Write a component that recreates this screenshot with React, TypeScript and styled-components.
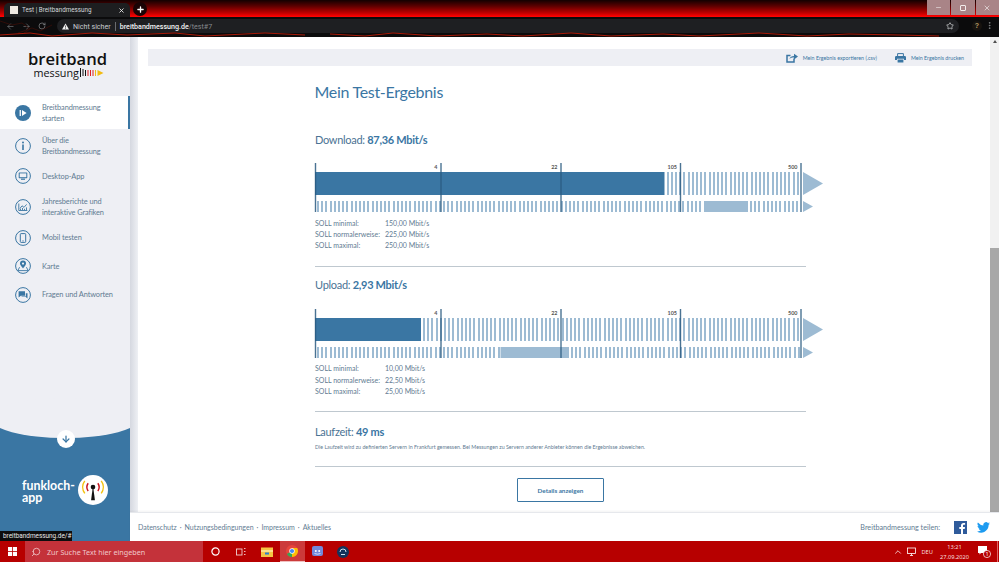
import styled, { createGlobalStyle } from "styled-components";
import { ArrowLeft, ArrowRight, RotateCw, Star, Plus, X, Minus, MoreVertical, ChevronUp, Search, ArrowDown } from "lucide-react";

const GlobalStyle = createGlobalStyle`
  html, body { margin: 0; padding: 0; background: #fff; }
  body { font-family: "Lato", "Noto Sans", sans-serif; overflow: hidden; }
  * { box-sizing: border-box; }
`;

const BLUE = "#3a76a3";
const LIGHT = "#9dbbd3";
const TEXT = "#5f7b92";

const Page = styled.div`
  width: 999px;
  height: 562px;
  display: flex;
  flex-direction: column;
  overflow: hidden;
  position: relative;
`;

/* browser chrome */
const Chrome = styled.header`
  height: 37px;
  flex: none;
  display: flex;
  flex-direction: column;
  position: relative;
  background: #0b0b0c;
`;
const TabStrip = styled.div`
  height: 17px;
  display: flex;
  align-items: flex-end;
  padding-left: 4px;
  gap: 3px;
  background: linear-gradient(180deg, #120000 0%, #5a0000 35%, #c40000 78%, #f00000 92%, #ff0505 100%);
`;
const Tab = styled.div`
  width: 126px;
  height: 14px;
  background: #1d1e20;
  border-radius: 5px 5px 0 0;
  display: flex;
  align-items: center;
  padding: 0 5px 0 6px;
  gap: 4px;
  color: #d6d8da;
  font: 6.3px "Roboto", sans-serif;
`;
const Favicon = styled.span`
  width: 8px;
  height: 8px;
  background: #efe9e2;
  flex: none;
`;
const TabTitle = styled.span`
  flex: 1;
  white-space: nowrap;
`;
const NewTab = styled.span`
  width: 14px;
  height: 14px;
  border-radius: 50%;
  background: #1a0305;
  color: #fff;
  display: flex;
  align-items: center;
  justify-content: center;
  margin-bottom: 1px;
`;
const WindowControls = styled.div`
  margin-left: auto;
  align-self: flex-start;
  display: flex;
  gap: 1px;
  height: 15px;
`;
const WindowButton = styled.span`
  width: 23.5px;
  height: 15px;
  background: #a98487;
  color: #f2ecec;
  display: flex;
  align-items: center;
  justify-content: center;
`;
const RestoreGlyph = styled.span`
  width: 6px;
  height: 6px;
  border: 1px solid #f2ecec;
  border-radius: 1px;
`;
const ToolRow = styled.div`
  height: 20px;
  display: flex;
  align-items: flex-start;
  padding: 2px 4px 0 6px;
  position: relative;
`;
const NavButtons = styled.div`
  width: 51px;
  height: 14px;
  display: flex;
  align-items: center;
  gap: 7px;
  color: #6a6c6f;
`;
const Omnibox = styled.div`
  width: 902px;
  height: 14px;
  background: #1e1f22;
  border-radius: 7px;
  display: flex;
  align-items: center;
  padding: 0 5px;
  font: 7.1px "Roboto", sans-serif;
  color: #c9cccf;
`;
const WarnIcon = styled.svg`
  width: 7px;
  height: 7px;
  margin: 0 4px 0 0;
`;
const UrlDivider = styled.span`
  width: 1px;
  height: 9px;
  background: #6a6c70;
  margin: 0 4px;
`;
const UrlHost = styled.span`
  color: #f2f3f4;
  font-weight: 500;
`;
const UrlPath = styled.span`
  color: #85888c;
`;
const OmniStar = styled.span`
  margin-left: auto;
  display: flex;
  color: #e4e5e7;
`;
const Avatar = styled.span`
  width: 10px;
  height: 10px;
  border-radius: 50%;
  background: #17130f;
  color: #b59a62;
  font: 700 7px "Liberation Sans", sans-serif;
  text-align: center;
  line-height: 10px;
  margin: 2px 0 0 13px;
`;
const MenuDots = styled.span`
  display: flex;
  color: #8f9194;
  margin: 2px 0 0 3px;
`;
const Lava = styled.svg`
  position: absolute;
  left: 0;
  top: 17px;
  width: 999px;
  height: 20px;
  pointer-events: none;
`;

/* body */
const Body = styled.div`
  flex: 1;
  min-height: 0;
  display: flex;
`;
const Sidebar = styled.aside`
  width: 130px;
  flex: none;
  display: flex;
  flex-direction: column;
  background: #eeeff4;
  overflow: hidden;
`;
const LogoBlock = styled.div`
  height: 59px;
  flex: none;
  padding: 13px 0 0 28px;
  color: #111;
  font-family: "Open Sans", sans-serif;
`;
const LogoTop = styled.div`
  font-size: 16.6px;
  font-weight: 600;
  line-height: 17px;
`;
const LogoBottom = styled.div`
  font-size: 10.8px;
  line-height: 11px;
  margin-left: 5.5px;
  display: flex;
  align-items: center;
  gap: 1px;
  white-space: nowrap;
`;
const NavList = styled.nav`
  display: flex;
  flex-direction: column;
`;
const NavItem = styled.a<{ $active?: boolean }>`
  min-height: 28.5px;
  padding: 5.5px 0 5.5px 15px;
  display: flex;
  align-items: center;
  gap: 11px;
  color: ${TEXT};
  font-size: 7.4px;
  letter-spacing: -0.1px;
  line-height: 11px;
  background: ${(p) => (p.$active ? "#fff" : "transparent")};
  border-right: 2px solid ${(p) => (p.$active ? BLUE : "transparent")};
`;
const NavGlyph = styled.svg`
  width: 16px;
  height: 16px;
  flex: none;
`;
const AppPanel = styled.div`
  margin-top: auto;
  height: 113px;
  background: ${BLUE};
  position: relative;
  display: flex;
  align-items: flex-start;
  padding: 52px 0 0 22px;
  &::before {
    content: "";
    position: absolute;
    left: -10px;
    right: -10px;
    top: -30px;
    height: 40px;
    background: #eeeff4;
    border-radius: 50%;
  }
`;
const DownBadge = styled.span`
  position: absolute;
  left: 57px;
  top: 2px;
  width: 18px;
  height: 18px;
  border-radius: 50%;
  background: #fff;
  color: ${BLUE};
  display: flex;
  align-items: center;
  justify-content: center;
`;
const AppName = styled.div`
  color: #fff;
  font-weight: 700;
  font-size: 12.4px;
  line-height: 12px;
  width: 56px;
`;
const AppLogo = styled.svg`
  width: 30px;
  height: 30px;
  flex: none;
  margin-top: -5px;
`;
const Right = styled.div`
  flex: 1;
  min-width: 0;
  display: flex;
  flex-direction: column;
`;
const Upper = styled.div`
  flex: 1;
  min-height: 0;
  display: flex;
`;
const Gutter = styled.div`
  width: 8px;
  flex: none;
  background: linear-gradient(90deg, #d5d8e0, #eef0f4);
`;
const Content = styled.main`
  flex: 1;
  min-width: 0;
  padding: 12px 18px 0 10px;
  background: #fff;
`;
const ScrollBar = styled.div`
  width: 9px;
  flex: none;
  background: #f1f1f1;
  display: flex;
  flex-direction: column;
  align-items: center;
  padding-top: 3px;
`;
const ScrollArrow = styled.span`
  width: 0;
  height: 0;
  border-left: 2.5px solid transparent;
  border-right: 2.5px solid transparent;
  border-bottom: 3px solid #505050;
`;
const ScrollThumb = styled.span`
  width: 100%;
  height: 264px;
  margin-top: auto;
  background: #a8a8a8;
`;
const ActionBar = styled.div`
  height: 17px;
  background: #eeeff4;
  display: flex;
  justify-content: flex-end;
  align-items: center;
  padding-right: 8px;
  gap: 18px;
`;
const Action = styled.a`
  display: flex;
  align-items: center;
  gap: 5px;
  color: ${BLUE};
  font-size: 5.3px;
  white-space: nowrap;
`;
const Report = styled.section`
  margin-left: 167px;
  width: 491px;
`;
const Title = styled.h1`
  margin: 15px 0 0 -0.5px;
  font-size: 16px;
  letter-spacing: -0.3px;
  line-height: 22px;
  font-weight: 400;
  color: ${BLUE};
`;
const Heading = styled.h2<{ $top: number }>`
  margin: ${(p) => p.$top}px 0 0;
  font-size: 11px;
  letter-spacing: -0.3px;
  line-height: 14px;
  font-weight: 400;
  color: #4b7394;
  strong {
    color: ${BLUE};
    font-weight: 700;
  }
`;
const ChartSvg = styled.svg<{ $top: number }>`
  display: block;
  width: 510px;
  height: 50px;
  margin-top: ${(p) => p.$top}px;
  overflow: visible;
`;
const SollTable = styled.dl`
  margin: 4.5px 0 0;
  display: grid;
  grid-template-columns: 70px auto;
  justify-content: start;
  font-size: 7px;
  line-height: 11.3px;
  color: ${TEXT};
  dt, dd { margin: 0; }
`;
const SollRow = styled.div`
  display: contents;
`;
const Rule = styled.hr<{ $top: number }>`
  margin: ${(p) => p.$top}px 0 0;
  border: 0;
  height: 1px;
  background: #bfc8cf;
`;
const Note = styled.p`
  margin: 4px 0 0;
  font-size: 5.3px;
  line-height: 8px;
  color: ${TEXT};
  white-space: nowrap;
`;
const DetailsButton = styled.button`
  display: block;
  width: 87px;
  height: 24px;
  margin: 11px 0 0 202px;
  background: #fff;
  border: 1.5px solid ${BLUE};
  border-radius: 1px;
  color: ${BLUE};
  font: 700 6.3px "Lato", sans-serif;
`;
const Footer = styled.footer`
  height: 29px;
  flex: none;
  background: #fff;
  border-top: 1px solid #e6e8ec;
  box-shadow: 0 -1px 2px rgba(0, 0, 0, 0.05);
  display: flex;
  align-items: center;
  padding: 0 9px 0 8px;
  color: ${TEXT};
  font-size: 7px;
  position: relative;
`;
const FooterLinks = styled.div`
  display: flex;
  gap: 3px;
`;
const Share = styled.div`
  margin-left: auto;
  display: flex;
  align-items: center;
  font-size: 7.2px;
  gap: 14px;
`;
const ShareIcons = styled.div`
  display: flex;
  align-items: center;
  gap: 10px;
`;
const StatusTip = styled.div`
  position: absolute;
  left: 0;
  bottom: 21px;
  height: 10px;
  width: 72px;
  background: #0d0d0e;
  color: #e8e8e8;
  font: 6.4px/10px "Roboto", sans-serif;
  padding-left: 3px;
`;

/* taskbar */
const Taskbar = styled.div`
  height: 21px;
  flex: none;
  background: #b70000;
  display: flex;
  align-items: stretch;
  color: #fff;
`;
const StartButton = styled.span`
  width: 25px;
  display: flex;
  align-items: center;
  justify-content: center;
`;
const SearchBox = styled.div`
  width: 178px;
  background: #c4323a;
  display: flex;
  align-items: center;
  padding-left: 6px;
  gap: 6px;
  color: #f0c8ca;
  font: 7.2px "Noto Sans", sans-serif;
`;
const SearchGlyph = styled(Search)`
  transform: scaleX(-1);
`;
const TaskIcon = styled.span<{ $active?: boolean }>`
  width: 25.5px;
  display: flex;
  align-items: center;
  justify-content: center;
  background: ${(p) => (p.$active ? "#cc3a3a" : "transparent")};
  border-bottom: ${(p) => (p.$active ? "1px solid #f0c0c0" : "0")};
`;
const TaskIcons = styled.div`
  display: flex;
`;
const Tray = styled.div`
  margin-left: auto;
  display: flex;
  align-items: center;
  font: 5.7px "Noto Sans", sans-serif;
  color: #f6dede;
`;
const TrayMonitor = styled.svg`
  width: 10px;
  height: 9px;
  margin-left: 3px;
`;
const TrayLang = styled.span`
  margin: 0 7px 0 5px;
`;
const Clock = styled.div`
  text-align: center;
  line-height: 10px;
  margin-right: 9px;
`;
const Notify = styled.svg`
  width: 13px;
  height: 13px;
  margin-right: 6px;
`;
const ShowDesktop = styled.span`
  width: 1px;
  align-self: stretch;
  margin-right: 1px;
  background: #d66;
`;

const navItems: { label: string[]; icon: React.ReactNode }[] = [
  {
    label: ["Breitbandmessung", "starten"],
    icon: (
      <>
        <circle cx="8" cy="8" r="8" fill={BLUE} />
        <rect x="4.6" y="5" width="1.3" height="6" fill="#fff" />
        <path d="M7 5l4.6 3L7 11z" fill="#fff" />
      </>
    ),
  },
  {
    label: ["Über die", "Breitbandmessung"],
    icon: (
      <>
        <circle cx="8" cy="8" r="7.4" fill="none" stroke={BLUE} />
        <circle cx="8" cy="4.6" r="1" fill={BLUE} />
        <rect x="7.2" y="6.5" width="1.6" height="5.5" fill={BLUE} />
      </>
    ),
  },
  {
    label: ["Desktop-App"],
    icon: (
      <>
        <circle cx="8" cy="8" r="7.4" fill="none" stroke={BLUE} />
        <rect x="3.7" y="4.4" width="8.6" height="5.8" rx="0.6" fill={BLUE} />
        <rect x="4.7" y="5.4" width="6.6" height="3.8" fill="#eeeff4" />
        <rect x="6" y="10.6" width="4" height="1.2" fill={BLUE} />
      </>
    ),
  },
  {
    label: ["Jahresberichte und", "interaktive Grafiken"],
    icon: (
      <>
        <circle cx="8" cy="8" r="7.4" fill="none" stroke={BLUE} />
        <path d="M3.8 4.5v7h8.6M5 9.4l2-2.6 2 1.6 2.6-3" fill="none" stroke={BLUE} strokeWidth="0.9" />
        <path d="M5.5 11v-1.4M7.5 11V9M9.5 11V9.8M11.5 11V8.4" stroke={BLUE} strokeWidth="0.9" />
      </>
    ),
  },
  {
    label: ["Mobil testen"],
    icon: (
      <>
        <circle cx="8" cy="8" r="7.4" fill="none" stroke={BLUE} />
        <rect x="5.3" y="3.6" width="5.4" height="8.8" rx="0.8" fill="none" stroke={BLUE} />
        <rect x="7.4" y="10.4" width="1.2" height="1" fill={BLUE} />
      </>
    ),
  },
  {
    label: ["Karte"],
    icon: (
      <>
        <circle cx="8" cy="8" r="7.4" fill="none" stroke={BLUE} />
        <path d="M8 2.6a3 3 0 0 1 3 3c0 1.8-3 4.8-3 4.8S5 7.4 5 5.6a3 3 0 0 1 3-3z" fill={BLUE} />
        <circle cx="8" cy="5.6" r="1.1" fill="#eeeff4" />
        <path d="M4.6 9.2L2.8 12.6h10.4l-1.8-3.4" fill="none" stroke={BLUE} strokeWidth="0.9" />
      </>
    ),
  },
  {
    label: ["Fragen und Antworten"],
    icon: (
      <>
        <circle cx="8" cy="8" r="7.4" fill="none" stroke={BLUE} />
        <path d="M3.6 4.2h6.4v4.6H5.800L3.6 10.600z" fill={BLUE} />
        <path d="M10.800 6.200h1.700v5.400l-1.700-1.500H6.600V9.500h4.200z" fill={BLUE} />
      </>
    ),
  },
];

type ChartProps = {
  top: number;
  solidEnd: number;
  blockStart: number;
  blockEnd: number;
};

// x values in the chart are offsets from the left edge of the report column
const TICKS = [
  { x: 0.5, label: "" },
  { x: 126, label: "4" },
  { x: 246, label: "22" },
  { x: 365.5, label: "105" },
  { x: 486, label: "500" },
];

function stripes(from: number, to: number, y: number, h: number) {
  const out: React.ReactNode[] = [];
  for (let x = from; x < to; x += 4.2) {
    out.push(<rect key={x} x={x} y={y} width={2} height={h} fill={LIGHT} shapeRendering="crispEdges" />);
  }
  return out;
}

function SpeedChart({ top, solidEnd, blockStart, blockEnd }: ChartProps) {
  return (
    <ChartSvg $top={top} viewBox="0 0 510 50">
      <rect x="0" y="9" width={solidEnd} height="23" fill={BLUE} />
      {stripes(solidEnd + 2, 485, 9, 23)}
      <path d="M488 9l20 11.5L488 32z" fill={LIGHT} />
      {stripes(2, blockStart - 2, 38, 11)}
      <rect x={blockStart} y="38" width={blockEnd - blockStart} height="11" fill={LIGHT} />
      {stripes(blockEnd + 2, 485, 38, 11)}
      <path d="M488 38l10 5.5L488 49z" fill={LIGHT} />
      {TICKS.map((t) => (
        <g key={t.x}>
          <rect x={t.x - 0.7} y="0" width="1.4" height="49" fill="#2a5a80" opacity={0.85} />
          <text x={t.x - 3.5} y="5.5" textAnchor="end" fontSize="5.4" fontWeight="700" fill="#555">
            {t.label}
          </text>
        </g>
      ))}
    </ChartSvg>
  );
}

function Soll({ rows }: { rows: string[] }) {
  const names = ["SOLL minimal:", "SOLL normalerweise:", "SOLL maximal:"];
  return (
    <SollTable>
      {names.map((name, i) => (
        <SollRow key={name}>
          <dt>{name}</dt>
          <dd>{rows[i]} Mbit/s</dd>
        </SollRow>
      ))}
    </SollTable>
  );
}

function WindowsLogo() {
  return (
    <svg width="9" height="9" viewBox="0 0 9 9" fill="#fff">
      <rect width="4.1" height="4.1" />
      <rect x="4.9" width="4.1" height="4.1" />
      <rect y="4.9" width="4.1" height="4.1" />
      <rect x="4.9" y="4.9" width="4.1" height="4.1" />
    </svg>
  );
}

const cracks = [
  "M0 18l30-2 22 3 40-3 35 2 48-2 30 3 60-3 40 2",
  "M330 17l35 2 28-3 44 3 50-2 36 2 48-3 40 3 52-2 36 2 60-3 48 3 42-2 50 1 40 1",
];
const faintCracks = ["M0 4l12 4 10-2 8 6-6 4", "M18 16l14-5 8 3 12-6"];

export default function App() {
  return (
    <Page>
      <GlobalStyle />
      <Chrome>
        <TabStrip>
          <Tab>
            <Favicon />
            <TabTitle>Test | Breitbandmessung</TabTitle>
            <X size={7} color="#e8e8e8" strokeWidth={3} />
          </Tab>
          <NewTab>
            <Plus size={9} strokeWidth={3.5} />
          </NewTab>
          <WindowControls>
            <WindowButton>
              <Minus size={7} />
            </WindowButton>
            <WindowButton>
              <RestoreGlyph />
            </WindowButton>
            <WindowButton>
              <X size={8} />
            </WindowButton>
          </WindowControls>
        </TabStrip>
        <ToolRow>
          <NavButtons>
            <ArrowLeft size={9} />
            <ArrowRight size={9} />
            <RotateCw size={8} color="#8d8f92" />
          </NavButtons>
          <Omnibox>
            <WarnIcon viewBox="0 0 10 10">
              <path d="M5 .6l5 8.8H0z" fill="#f0f0f0" />
              <rect x="4.5" y="3.6" width="1" height="3" fill="#1e1f22" />
              <rect x="4.5" y="7.2" width="1" height="1" fill="#1e1f22" />
            </WarnIcon>
            Nicht sicher
            <UrlDivider />
            <UrlHost>breitbandmessung.de</UrlHost>
            <UrlPath>/test#7</UrlPath>
            <OmniStar>
              <Star size={8} />
            </OmniStar>
          </Omnibox>
          <Avatar>?</Avatar>
          <MenuDots>
            <MoreVertical size={9} />
          </MenuDots>
        </ToolRow>
        <Lava viewBox="0 0 999 20" fill="none">
          {faintCracks.map((d) => (
            <path key={d} d={d} stroke="#3a0e08" strokeWidth="0.8" />
          ))}
          {cracks.map((d) => (
            <path key={d} d={d} stroke="#a81a08" strokeWidth="1" />
          ))}
        </Lava>
      </Chrome>

      <Body>
        <Sidebar>
          <LogoBlock>
            <LogoTop>breitband</LogoTop>
            <LogoBottom>
              messung
              <svg width="26" height="9" viewBox="0 0 26 9">
                <rect x="0" y="0" width="1" height="9" fill="#111" />
                <rect x="2.5" y="1" width="1" height="7" fill="#111" />
                <rect x="5" y="2" width="1" height="6" fill="#111" />
                <rect x="7.5" y="2" width="1" height="6" fill="#d22" />
                <rect x="10" y="2" width="1" height="6" fill="#d22" />
                <rect x="12.5" y="2" width="1" height="6" fill="#d22" />
                <rect x="15" y="2" width="1" height="6" fill="#f2bb10" />
                <path d="M17.5 2l6 3-6 3z" fill="#f2bb10" />
              </svg>
            </LogoBottom>
          </LogoBlock>
          <NavList>
            {navItems.map((item, i) => (
              <NavItem key={item.label[0]} $active={i === 0}>
                <NavGlyph viewBox="0 0 16 16">{item.icon}</NavGlyph>
                <span>
                  {item.label.map((line) => (
                    <div key={line}>{line}</div>
                  ))}
                </span>
              </NavItem>
            ))}
          </NavList>
          <AppPanel>
            <DownBadge>
              <ArrowDown size={10} strokeWidth={3} />
            </DownBadge>
            <AppName>
              funkloch-
              <br />
              app
            </AppName>
            <AppLogo viewBox="0 0 31 31">
              <circle cx="15.5" cy="15.5" r="15.5" fill="#fff" />
              <path d="M15.5 11l2 15h-4z" fill="#111" />
              <circle cx="15.5" cy="12.5" r="2.4" fill="#111" />
              <path d="M10.5 8.5a7 7 0 0 0 0 8M20.5 8.5a7 7 0 0 1 0 8" fill="none" stroke="#c8141e" strokeWidth="1.5" />
              <path d="M7 6a11 11 0 0 0 0 13M24 6a11 11 0 0 1 0 13" fill="none" stroke="#f4c20d" strokeWidth="1.5" />
            </AppLogo>
          </AppPanel>
        </Sidebar>

        <Right>
          <Upper>
            <Gutter />
            <Content>
              <ActionBar>
                <Action>
                  <svg width="12" height="10" viewBox="0 0 12 10">
                    <path d="M8 5.5V9H1V2.5h3.5" fill="none" stroke={BLUE} strokeWidth="1.5" />
                    <path d="M3.4 6.2C4 3.8 5.8 2.9 8 2.9V.8L12 3.6 8 6.4V4.6C6 4.6 4.6 5 3.4 6.2z" fill={BLUE} />
                  </svg>
                  Mein Ergebnis exportieren (.csv)
                </Action>
                <Action>
                  <svg width="11" height="10" viewBox="0 0 11 10">
                    <path d="M2.6 3V.6h5.8V3" fill="none" stroke={BLUE} />
                    <path d="M1.2 3h8.6q1.2 0 1.2 1.2V7H9V5.8H2V7H0V4.2Q0 3 1.2 3z" fill={BLUE} />
                    <path d="M2.6 6.5h5.8v3H2.6z" fill={BLUE} />
                  </svg>
                  Mein Ergebnis drucken
                </Action>
              </ActionBar>
              <Report>
                <Title>Mein Test-Ergebnis</Title>
                <Heading $top={30}>
                  Download: <strong>87,36 Mbit/s</strong>
                </Heading>
                <SpeedChart top={16} solidEnd={349.5} blockStart={389} blockEnd={433} />
                <Soll rows={["150,00", "225,00", "250,00"]} />
                <Rule $top={14.5} />
                <Heading $top={11}>
                  Upload: <strong>2,93 Mbit/s</strong>
                </Heading>
                <SpeedChart top={17} solidEnd={106} blockStart={185.5} blockEnd={254} />
                <Soll rows={["10,00", "22,50", "25,00"]} />
                <Rule $top={14} />
                <Heading $top={13}>
                  Laufzeit: <strong>49 ms</strong>
                </Heading>
                <Note>
                  Die Laufzeit wird zu definierten Servern in Frankfurt gemessen. Bei Messungen zu Servern anderer Anbieter können die Ergebnisse abweichen.
                </Note>
                <Rule $top={15} />
                <DetailsButton>Details anzeigen</DetailsButton>
              </Report>
            </Content>
            <ScrollBar>
              <ScrollArrow />
              <ScrollThumb />
            </ScrollBar>
          </Upper>
          <Footer>
            <FooterLinks>
              <span>Datenschutz</span>
              <span>·</span>
              <span>Nutzungsbedingungen</span>
              <span>·</span>
              <span>Impressum</span>
              <span>·</span>
              <span>Aktuelles</span>
            </FooterLinks>
            <Share>
              Breitbandmessung teilen:
              <ShareIcons>
                <svg width="13" height="13" viewBox="0 0 13 13">
                  <rect width="13" height="13" fill="#2f5b9b" />
                  <path d="M9 13V8h1.7l.3-2H9V4.8c0-.6.2-1 1-1h1.1V2c-.3 0-.9-.1-1.600-.1C8 1.900 7 2.800 7 4.500V6H5.300v2H7v5z" fill="#fff" />
                </svg>
                <svg width="13" height="11" viewBox="0 0 24 20">
                  <path d="M24 2.400a10 10 0 0 1-2.800.8A5 5 0 0 0 23.300.500a10 10 0 0 1-3.100 1.200 4.900 4.900 0 0 0-8.400 4.500A14 14 0 0 1 1.700.900a4.900 4.900 0 0 0 1.500 6.600 5 5 0 0 1-2.200-.6c0 2.400 1.700 4.400 3.900 4.900a5 5 0 0 1-2.200.1 5 5 0 0 0 4.600 3.400A10 10 0 0 1 0 17.300 14 14 0 0 0 7.500 19.500c9 0 14-7.500 14-14v-.6A10 10 0 0 0 24 2.400z" fill="#1d9bf0" />
                </svg>
              </ShareIcons>
            </Share>
          </Footer>
        </Right>
      </Body>

      <StatusTip>breitbandmessung.de/#</StatusTip>

      <Taskbar>
        <StartButton>
          <WindowsLogo />
        </StartButton>
        <SearchBox>
          <SearchGlyph size={10} />
          Zur Suche Text hier eingeben
        </SearchBox>
        <TaskIcons>
          <TaskIcon>
            <svg width="9" height="9" viewBox="0 0 9 9">
              <circle cx="4.5" cy="4.5" r="3.6" fill="none" stroke="#fff" strokeWidth="1.2" />
            </svg>
          </TaskIcon>
          <TaskIcon>
            <svg width="10" height="8" viewBox="0 0 10 8" fill="none" stroke="#f0d0d0" strokeWidth="0.9">
              <rect x="0.5" y="1" width="5.500" height="6" />
              <path d="M8 .500h1.500M8 3.500h1.500M8 6.500h1.500" />
            </svg>
          </TaskIcon>
          <TaskIcon>
            <svg width="12" height="10" viewBox="0 0 12 10">
              <rect y="0.500" width="12" height="9.500" fill="#f6c544" />
              <rect y="3" width="12" height="2" fill="#fde08a" />
              <rect x="4" y="5.500" width="4" height="2" fill="#2a7fd0" />
            </svg>
          </TaskIcon>
          <TaskIcon $active>
            <svg width="12" height="12" viewBox="0 0 12 12">
              <circle cx="6" cy="6" r="6" fill="#e8453c" />
              <path d="M6 6L.8 9A6 6 0 0 0 6 12z" fill="#34a853" />
              <path d="M6 6v6A6 6 0 0 0 11.200 3H6z" fill="#fbbc05" />
              <circle cx="6" cy="6" r="2.700" fill="#fff" />
              <circle cx="6" cy="6" r="2.100" fill="#4285f4" />
            </svg>
          </TaskIcon>
          <TaskIcon>
            <svg width="11" height="11" viewBox="0 0 11 11">
              <rect width="11" height="10" rx="2" fill="#7289da" />
              <circle cx="3.800" cy="5" r="1" fill="#fff" />
              <circle cx="7.200" cy="5" r="1" fill="#fff" />
              <path d="M2.500 7.500q3 1.400 6 0" fill="none" stroke="#fff" strokeWidth="0.700" />
            </svg>
          </TaskIcon>
          <TaskIcon>
            <svg width="12" height="12" viewBox="0 0 12 12">
              <circle cx="6" cy="6" r="6" fill="#14335c" />
              <path d="M3 6a3 3 0 0 1 6 0M4 8.500h4" fill="none" stroke="#cfe0ee" strokeWidth="1" />
            </svg>
          </TaskIcon>
        </TaskIcons>
        <Tray>
          <ChevronUp size={10} />
          <TrayMonitor viewBox="0 0 10 9" fill="none" stroke="#fff" strokeWidth="0.800">
            <rect x="1.500" y="1" width="8" height="5.500" />
            <path d="M4 8.500h3M5.500 6.500v2" />
          </TrayMonitor>
          <TrayLang>DEU</TrayLang>
          <Clock>
            13:21
            <br />
            27.09.2020
          </Clock>
          <Notify viewBox="0 0 13 13">
            <path d="M0 1h9v7H3L1.500 9.500V8H0z" fill="#fff" />
            <circle cx="9" cy="9" r="3.600" fill="#b70000" stroke="#fff" strokeWidth="0.700" />
            <text x="9" y="11" textAnchor="middle" fontSize="5.500" fill="#fff">
              1
            </text>
          </Notify>
          <ShowDesktop />
        </Tray>
      </Taskbar>
    </Page>
  );
}
